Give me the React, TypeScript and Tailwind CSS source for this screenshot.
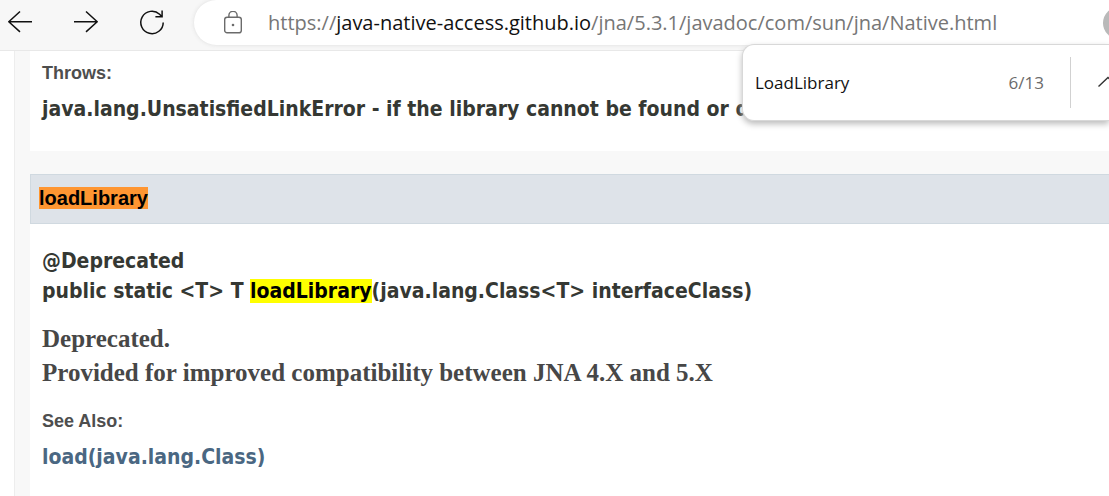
import React from "react";

const code = "font-['DejaVu_Sans_Condensed','DejaVu_Sans',sans-serif] text-[21px] leading-[30px] font-bold text-[#353833]";
const label = "font-['Liberation_Sans',sans-serif] text-[18px] leading-6 font-bold text-[#4e4e4e]";
const serif = "font-['Liberation_Serif',serif] text-[25px] leading-[34px] font-bold text-[#474747]";

function Toolbar() {
  return (
    <header className="flex h-[51px] items-start border-b border-[#e8e8e8] bg-[#f7f7f7]">
      <nav aria-label="Browser" className="flex w-[194px] shrink-0 gap-[42px] pt-[10px] pl-2 text-[#111]">
        <button type="button" aria-label="Back" className="size-6">
          <svg viewBox="0 0 24 24" className="size-6" fill="none" stroke="currentColor" strokeWidth="1.5">
            <path d="M24 11.7H.8M12 1.5.8 11.7 12 21.9" />
          </svg>
        </button>
        <button type="button" aria-label="Forward" className="size-6">
          <svg viewBox="0 0 24 24" className="size-6" fill="none" stroke="currentColor" strokeWidth="1.5">
            <path d="M0 11.7h23.2M12 1.5l11.2 10.2L12 21.9" />
          </svg>
        </button>
        <button type="button" aria-label="Reload" className="size-6">
          <svg viewBox="0 0 24 24" className="size-6 overflow-visible" fill="none" stroke="currentColor" strokeWidth="1.5">
            <path d="M23.2 12.4A11.2 11.2 0 1 1 19.6 4.2L21.7 6.6M22.1 .6V6.8H15.4" />
          </svg>
        </button>
      </nav>
      <div className="flex h-[45px] min-w-0 grow items-center overflow-hidden rounded-l-full bg-white pl-[30px] shadow-[0_0_4px_#dedede]">
        <svg viewBox="0 0 18 24" className="h-6 w-[18px] shrink-0" fill="none" stroke="#6b6b6b" strokeWidth="1.4" aria-hidden="true">
          <rect x=".7" y="6.2" width="16.6" height="15.6" rx="2.4" />
          <path d="M4.9 6.2V4.3a4.1 4.1 0 0 1 8.2 0v1.9" />
          <circle cx="9" cy="14" r="1.3" fill="#6b6b6b" stroke="none" />
        </svg>
        <div
          role="textbox"
          aria-label="Address"
          contentEditable
          suppressContentEditableWarning
          className="ml-[26px] grow font-['Open_Sans',sans-serif] text-[20px] leading-7 whitespace-nowrap text-[#767676] outline-none"
        >
          https://<span className="text-[#111]">java-native-access.github.io</span>/jna/5.3.1/javadoc/com/sun/jna/Native.html
        </div>
        <button type="button" aria-label="Profile" className="-mr-[26px] size-8 shrink-0 rounded-full bg-[#b9b9b9]" />
      </div>
    </header>
  );
}

function FindBar() {
  return (
    <form
      aria-label="Find on page"
      className="absolute top-[44px] right-0 flex h-[77px] w-[367px] items-center overflow-hidden rounded-l-xl border border-r-0 border-[#d8d8d8] bg-white pl-3 font-['Open_Sans',sans-serif] text-[17px] shadow-[0_3px_6px_#bbb]"
    >
      <input aria-label="Find" defaultValue="LoadLibrary" className="min-w-0 grow text-[#111] outline-none" />
      <output className="text-[#6b6b6b]">6/13</output>
      <div className="ml-[26px] h-[51px] w-px bg-[#d1d1d1]" />
      <button type="button" aria-label="Previous match" className="ml-[27px] h-6 w-[11px] overflow-hidden">
        <svg viewBox="0 0 22 24" className="h-6 w-[22px] max-w-none" fill="none" stroke="#333" strokeWidth="1.4">
          <path d="M.5 15.5 10 6.5 19.5 15.5" />
        </svg>
      </button>
    </form>
  );
}

export default function App() {
  return (
    <div className="relative flex min-h-screen flex-col overflow-hidden bg-white">
      <Toolbar />
      <main className="ml-[14px] grow border-l border-[#ededed] bg-[#f8f8f8] pl-[15px]">
        <section className="bg-white pt-[10px] pb-[27px] pl-3">
          <dl>
            <dt className={label}>Throws:</dt>
            <dd className={`${code} mt-[9px] whitespace-nowrap`}>
              java.lang.UnsatisfiedLinkError - if the library cannot be found or dependent libraries are missing.
            </dd>
          </dl>
        </section>
        <section className="mt-[23px] bg-white pb-8">
          <h4 className="flex h-[50px] items-center border border-r-0 border-[#d0d9e0] bg-[#dee3e9] pb-0.5 pl-2 font-['Liberation_Sans',sans-serif] text-[20px] leading-[22px] font-bold text-black">
            <mark className="bg-[#ff9632] text-black">loadLibrary</mark>
          </h4>
          <div className="pt-[22px] pl-3">
            <div className={code}>
              @Deprecated
              <br />
              public static &lt;T&gt; T <mark className="bg-[#ffff00] text-black">loadLibrary</mark>(java.lang.Class&lt;T&gt; interfaceClass)
            </div>
            <p className={`${serif} mt-4`}>
              Deprecated.
              <br />
              Provided for improved compatibility between JNA 4.X and 5.X
            </p>
            <dl className="mt-[19px]">
              <dt className={label}>See Also:</dt>
              <dd className={`${code} mt-[9px]`}>
                <a href="#load" className="text-[#4a6782]">load(java.lang.Class)</a>
              </dd>
            </dl>
          </div>
        </section>
      </main>
      <FindBar />
    </div>
  );
}
